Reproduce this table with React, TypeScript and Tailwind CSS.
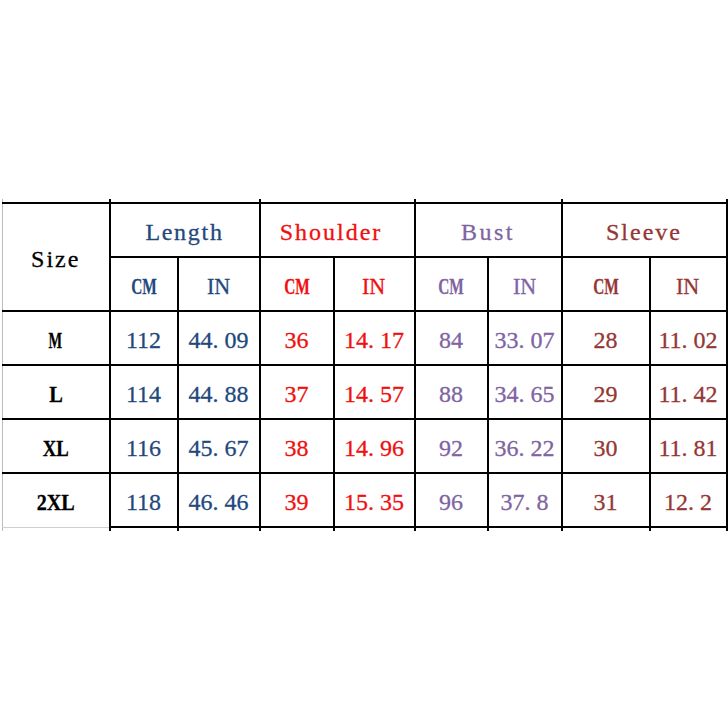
import React from "react";

const BLUE = "text-[#1f497d]";
const RED = "text-[#f01010]";
const PURPLE = "text-[#8064a2]";
const DRED = "text-[#953735]";

const colors = [BLUE, BLUE, RED, RED, PURPLE, PURPLE, DRED, DRED];

const rows: { size: string; scale: string; vals: string[] }[] = [
  { size: "M", scale: "scale-x-[0.6]", vals: ["112", "44.09", "36", "14.17", "84", "33.07", "28", "11.02"] },
  { size: "L", scale: "scale-x-[0.85]", vals: ["114", "44.88", "37", "14.57", "88", "34.65", "29", "11.42"] },
  { size: "XL", scale: "scale-x-[0.78]", vals: ["116", "45.67", "38", "14.96", "92", "36.22", "30", "11.81"] },
  { size: "2XL", scale: "scale-x-[0.84]", vals: ["118", "46.46", "39", "15.35", "96", "37.8", "31", "12.2"] },
];

function Num({ v }: { v: string }) {
  const i = v.indexOf(".");
  if (i < 0) return <span>{v}</span>;
  return (
    <span>
      {v.slice(0, i)}
      <span className="mr-[6px]">.</span>
      {v.slice(i + 1)}
    </span>
  );
}

const cell = "border-2 border-black p-0 pt-[4px] text-center align-middle";

export default function App() {
  return (
    <div className="w-[728px] h-[728px] overflow-hidden bg-white font-['Liberation_Serif',serif] text-[24px] leading-none [-webkit-text-stroke:0.3px_currentColor]">
      <table className="table-fixed border-collapse w-[724px] ml-[2px] mt-[199px]">
        <colgroup>
          <col className="w-[107px]" />
          <col className="w-[68px]" />
          <col className="w-[82px]" />
          <col className="w-[74px]" />
          <col className="w-[81px]" />
          <col className="w-[73px]" />
          <col className="w-[74px]" />
          <col className="w-[88px]" />
          <col className="w-[77px]" />
        </colgroup>
        <tbody>
          <tr className="h-[4px]">
            <td className="p-0 border-l border-l-[#bdbdbd] border-r-2 border-r-black" />
            <td colSpan={2} className="p-0 border-r-2 border-r-black" />
            <td colSpan={2} className="p-0 border-r-2 border-r-black" />
            <td colSpan={2} className="p-0 border-r-2 border-r-black" />
            <td colSpan={2} className="p-0 border-r-2 border-r-black" />
          </tr>
          <tr className="h-[54px]">
            <td rowSpan={2} className={`${cell} border-l border-l-[#bdbdbd] text-black tracking-[2px]`}>Size</td>
            <td colSpan={2} className={`${cell} ${BLUE} tracking-[1.7px]`}>Length</td>
            <td colSpan={2} className={`${cell} ${RED} tracking-[2px] pr-[12px]`}>Shoulder</td>
            <td colSpan={2} className={`${cell} ${PURPLE} tracking-[2.5px]`}>Bust</td>
            <td colSpan={2} className={`${cell} ${DRED} tracking-[2px]`}>Sleeve</td>
          </tr>
          <tr className="h-[54px]">
            {colors.map((c, i) => (
              <td key={i} className={`${cell} ${c}`}>
                {i % 2 === 0 ? (
                  <span className="inline-block font-bold scale-x-[0.64]">CM</span>
                ) : (
                  <span className="inline-block scale-x-[0.92]">IN</span>
                )}
              </td>
            ))}
          </tr>
          {rows.map((r, ri) => (
            <tr key={r.size} className="h-[54px]">
              <td
                className={`${cell} border-l border-l-[#bdbdbd] text-black ${
                  ri === rows.length - 1 ? "border-b border-b-[#cfcfcf]" : ""
                }`}
              >
                <span className={`inline-block font-bold ${r.scale}`}>{r.size}</span>
              </td>
              {r.vals.map((v, i) => (
                <td key={i} className={`${cell} ${colors[i]}`}>
                  <Num v={v} />
                </td>
              ))}
            </tr>
          ))}
          <tr className="h-[4px]">
            <td className="p-0 border-l border-l-[#bdbdbd] border-r-2 border-r-black" />
            <td className="p-0 border-r-2 border-r-black" />
            <td className="p-0 border-r-2 border-r-black" />
            <td className="p-0 border-r-2 border-r-black" />
            <td className="p-0 border-r-2 border-r-black" />
            <td className="p-0 border-r-2 border-r-black" />
            <td className="p-0 border-r-2 border-r-black" />
            <td className="p-0 border-r-2 border-r-black" />
            <td className="p-0 border-r-2 border-r-black" />
          </tr>
        </tbody>
      </table>
    </div>
  );
}
